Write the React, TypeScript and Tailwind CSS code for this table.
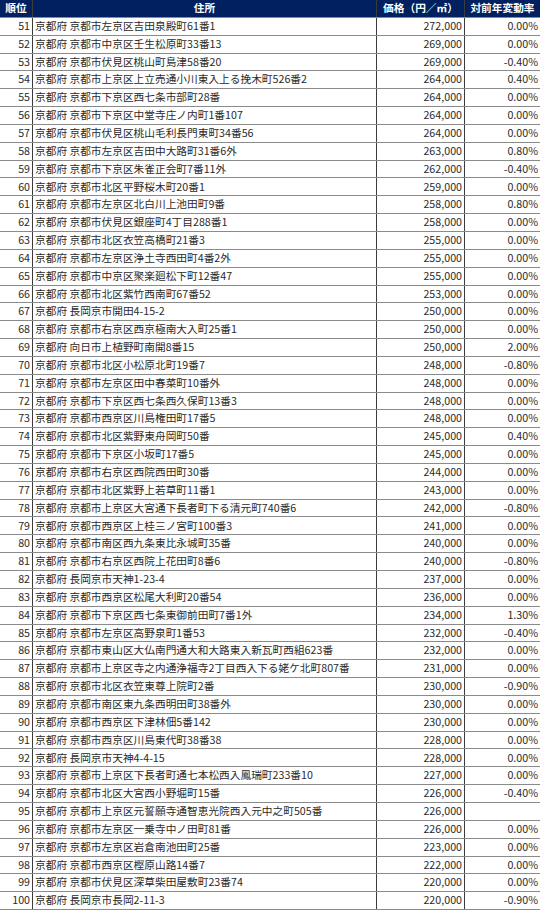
import React from "react";

const rows: [number, string, string, string][] = [
  [51, "京都府 京都市左京区吉田泉殿町61番1", "272,000", "0.00%"],
  [52, "京都府 京都市中京区壬生松原町33番13", "269,000", "0.00%"],
  [53, "京都府 京都市伏見区桃山町島津58番20", "269,000", "-0.40%"],
  [54, "京都府 京都市上京区上立売通小川東入上る挽木町526番2", "264,000", "0.40%"],
  [55, "京都府 京都市下京区西七条市部町28番", "264,000", "0.00%"],
  [56, "京都府 京都市下京区中堂寺庄ノ内町1番107", "264,000", "0.00%"],
  [57, "京都府 京都市伏見区桃山毛利長門東町34番56", "264,000", "0.00%"],
  [58, "京都府 京都市左京区吉田中大路町31番6外", "263,000", "0.80%"],
  [59, "京都府 京都市下京区朱雀正会町7番11外", "262,000", "-0.40%"],
  [60, "京都府 京都市北区平野桜木町20番1", "259,000", "0.00%"],
  [61, "京都府 京都市左京区北白川上池田町9番", "258,000", "0.80%"],
  [62, "京都府 京都市伏見区銀座町4丁目288番1", "258,000", "0.00%"],
  [63, "京都府 京都市北区衣笠高橋町21番3", "255,000", "0.00%"],
  [64, "京都府 京都市左京区浄土寺西田町4番2外", "255,000", "0.00%"],
  [65, "京都府 京都市中京区聚楽廻松下町12番47", "255,000", "0.00%"],
  [66, "京都府 京都市北区紫竹西南町67番52", "253,000", "0.00%"],
  [67, "京都府 長岡京市開田4-15-2", "250,000", "0.00%"],
  [68, "京都府 京都市右京区西京極南大入町25番1", "250,000", "0.00%"],
  [69, "京都府 向日市上植野町南開8番15", "250,000", "2.00%"],
  [70, "京都府 京都市北区小松原北町19番7", "248,000", "-0.80%"],
  [71, "京都府 京都市左京区田中春菜町10番外", "248,000", "0.00%"],
  [72, "京都府 京都市下京区西七条西久保町13番3", "248,000", "0.00%"],
  [73, "京都府 京都市西京区川島権田町17番5", "248,000", "0.00%"],
  [74, "京都府 京都市北区紫野東舟岡町50番", "245,000", "0.40%"],
  [75, "京都府 京都市下京区小坂町17番5", "245,000", "0.00%"],
  [76, "京都府 京都市右京区西院西田町30番", "244,000", "0.00%"],
  [77, "京都府 京都市北区紫野上若草町11番1", "243,000", "0.00%"],
  [78, "京都府 京都市上京区大宮通下長者町下る清元町740番6", "242,000", "-0.80%"],
  [79, "京都府 京都市西京区上桂三ノ宮町100番3", "241,000", "0.00%"],
  [80, "京都府 京都市南区西九条東比永城町35番", "240,000", "0.00%"],
  [81, "京都府 京都市右京区西院上花田町8番6", "240,000", "-0.80%"],
  [82, "京都府 長岡京市天神1-23-4", "237,000", "0.00%"],
  [83, "京都府 京都市西京区松尾大利町20番54", "236,000", "0.00%"],
  [84, "京都府 京都市下京区西七条東御前田町7番1外", "234,000", "1.30%"],
  [85, "京都府 京都市左京区高野泉町1番53", "232,000", "-0.40%"],
  [86, "京都府 京都市東山区大仏南門通大和大路東入新瓦町西組623番", "232,000", "0.00%"],
  [87, "京都府 京都市上京区寺之内通浄福寺2丁目西入下る姥ケ北町807番", "231,000", "0.00%"],
  [88, "京都府 京都市北区衣笠東尊上院町2番", "230,000", "-0.90%"],
  [89, "京都府 京都市南区東九条西明田町38番外", "230,000", "0.00%"],
  [90, "京都府 京都市西京区下津林佃5番142", "230,000", "0.00%"],
  [91, "京都府 京都市西京区川島東代町38番38", "228,000", "0.00%"],
  [92, "京都府 長岡京市天神4-4-15", "228,000", "0.00%"],
  [93, "京都府 京都市上京区下長者町通七本松西入鳳瑞町233番10", "227,000", "0.00%"],
  [94, "京都府 京都市北区大宮西小野堀町15番", "226,000", "-0.40%"],
  [95, "京都府 京都市上京区元誓願寺通智恵光院西入元中之町505番", "226,000", ""],
  [96, "京都府 京都市左京区一乗寺中ノ田町81番", "226,000", "0.00%"],
  [97, "京都府 京都市左京区岩倉南池田町25番", "223,000", "0.00%"],
  [98, "京都府 京都市西京区樫原山路14番7", "222,000", "0.00%"],
  [99, "京都府 京都市伏見区深草柴田屋敷町23番74", "220,000", "0.00%"],
  [100, "京都府 長岡京市長岡2-11-3", "220,000", "-0.90%"],
];

export default function App() {
  return (
    <div
      className="w-[540px] h-[910px] bg-white flex flex-col overflow-hidden text-[10.7px] leading-none text-[#2a2a2a]"
      style={{ fontFamily: '"Noto Sans CJK JP", "Noto Sans", sans-serif' }}
    >
      <div className="flex-1 flex bg-[#002060] text-white font-bold border-b border-[#8a8a8a]">
        <div className="w-[33px] shrink-0 flex items-center justify-center border-r border-[#3b3b3b]">順位</div>
        <div className="w-[344px] shrink-0 flex items-center justify-center border-r border-[#3b3b3b]">住所</div>
        <div className="w-[88px] shrink-0 flex items-center justify-center border-r border-[#3b3b3b]">価格（円／㎡）</div>
        <div className="flex-1 flex items-center justify-center">対前年変動率</div>
      </div>
      {rows.map(([rank, addr, price, rate]) => (
        <div key={rank} className="flex-1 min-h-0 flex border-b border-[#8a8a8a]">
          <div className="w-[33px] shrink-0 flex items-center justify-end pr-[2px] border-r border-[#3b3b3b]">{rank}</div>
          <div className="w-[344px] shrink-0 flex items-center pl-[2px] border-r border-[#3b3b3b] whitespace-nowrap overflow-hidden">{addr}</div>
          <div className="w-[88px] shrink-0 flex items-center justify-end pr-[2px] border-r border-[#3b3b3b]">{price}</div>
          <div className="flex-1 flex items-center justify-end pr-[2px]">{rate}</div>
        </div>
      ))}
    </div>
  );
}
